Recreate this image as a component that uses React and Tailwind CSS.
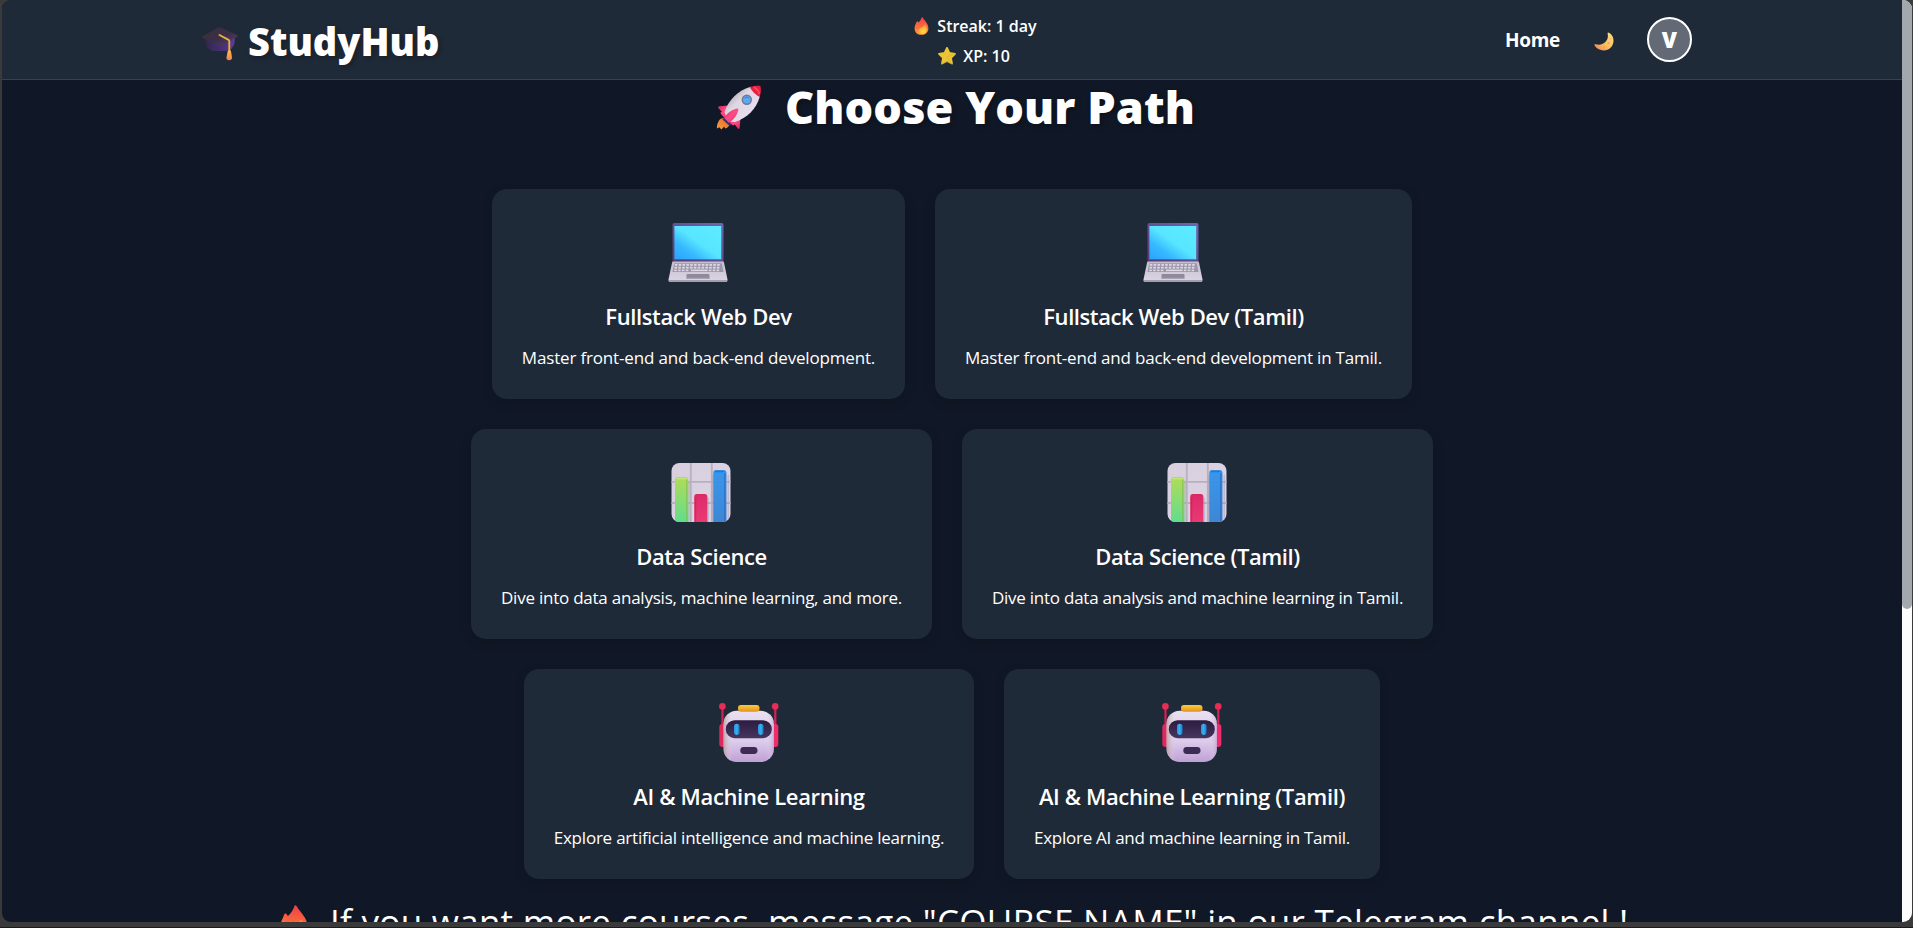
import React from "react";

function CapIcon() {
  return (
    <svg className="h-[37px] w-[38px] shrink-0" viewBox="0 0 38 37">
      <defs>
        <linearGradient id="capTop" x1="0" y1="0" x2="1" y2="1">
          <stop offset="0" stopColor="#3a3038" />
          <stop offset=".55" stopColor="#3b2f48" />
          <stop offset="1" stopColor="#5b4173" />
        </linearGradient>
        <linearGradient id="capBase" x1="0" y1="0" x2="1" y2="0">
          <stop offset="0" stopColor="#33274a" />
          <stop offset=".6" stopColor="#49307a" />
          <stop offset="1" stopColor="#5d3f8f" />
        </linearGradient>
        <linearGradient id="tassel" x1="0" y1="0" x2="0" y2="1">
          <stop offset="0" stopColor="#ffc04a" />
          <stop offset="1" stopColor="#f87b56" />
        </linearGradient>
      </defs>
      <path d="M4.5 13 L5.5 20 Q8 25 15 25 H24 Q32 24.5 33.5 17 L34 11 Z" fill="url(#capBase)" />
      <path d="M.8 11.5 Q.4 10.8 1.4 10.3 L17.5 1.4 Q18.5 1 19.5 1.4 L36.3 9.2 Q37.2 9.8 36.4 10.4 L21.5 19.5 Q20.3 20.2 19 19.6 Z" fill="url(#capTop)" />
      <path d="M18.5 9 L27.5 13.8 Q28.3 14.4 28.3 15.5 V26" fill="none" stroke="#e8b13c" strokeWidth="1.9" strokeLinecap="round" />
      <path d="M28.3 24 Q30.3 24 30.2 26.5 L31 31.5 Q31 34.3 28.2 34.3 Q25.2 34.3 25.5 31.5 L26.4 26.5 Q26.4 24 28.3 24Z" fill="url(#tassel)" />
    </svg>
  );
}

function FireIcon({ className }) {
  return (
    <svg className={className} viewBox="0 0 28 34">
      <defs>
        <linearGradient id="flame" x1=".6" y1="0" x2=".5" y2="1">
          <stop offset="0" stopColor="#f03d48" />
          <stop offset=".5" stopColor="#fa6c3c" />
          <stop offset="1" stopColor="#ff9a36" />
        </linearGradient>
        <radialGradient id="ember" cx=".6" cy=".75" r=".7">
          <stop offset="0" stopColor="#ffdc3e" />
          <stop offset=".6" stopColor="#ffb43b" />
          <stop offset="1" stopColor="#ff8a3a" />
        </radialGradient>
      </defs>
      <path d="M14.5 .6 C15.6 -.2 16.5 1 17.3 2.4 C20 7 27 12.5 27 21.5 C27 29.5 21 33.5 14 33.5 C6.5 33.5 1 29 1 21.5 C1 16.5 3 14 4.5 9.5 C5.2 7.6 6.6 7.6 7.4 9.2 L8.2 10.4 C10.5 8.5 13.5 4.5 14.5 .6Z" fill="url(#flame)" />
      <path d="M20.2 14.5 C21 13.4 21.8 14 22 15.3 C22.6 18 24.5 20 24.3 24.5 C24 29.6 20 32.4 15.3 32.4 C9.6 32.4 7 28.5 7.8 25 C8.8 20.8 17 19.8 20.2 14.5Z" fill="url(#ember)" />
      <path d="M14 8 C11.5 14 5.5 16 5 23 M9.5 12 C7 15 4 17.5 3.2 22 M16 11 C15 16 9.5 18 8 22.5" fill="none" stroke="#e8513f" strokeOpacity=".55" strokeWidth=".9" />
    </svg>
  );
}

function StarIcon() {
  return (
    <svg className="h-[18px] w-[18px] shrink-0" viewBox="0 0 18 18">
      <path d="M9 .9 L11.4 6 L17 6.8 L13 10.8 L14 16.5 L9 13.9 L4 16.5 L5 10.8 L1 6.8 L6.6 6Z" fill="#ebc437" stroke="#ebc437" strokeWidth="1.8" strokeLinejoin="round" />
      <path d="M4 16.9 L9 14.3 L14 16.9" fill="none" stroke="#c79a45" strokeWidth=".8" strokeLinecap="round" />
      <path d="M9 10 L15.5 7 M9 10 L12.6 15" stroke="#d9ad2d" strokeWidth=".6" />
    </svg>
  );
}

function MoonIcon() {
  return (
    <svg className="h-[19px] w-[20px] shrink-0" viewBox="0 0 20 19">
      <defs>
        <linearGradient id="moon" x1="1" y1="0" x2="0" y2="1">
          <stop offset="0" stopColor="#ffe08a" />
          <stop offset=".55" stopColor="#fdbd5e" />
          <stop offset="1" stopColor="#ee8455" />
        </linearGradient>
      </defs>
      <path d="M14.3 .6 C17.6 2 19.6 5 19.5 9 C19.3 14.6 15 18.4 9.8 18.4 C5.8 18.4 2.2 16.4 .5 13.2 C.2 12.4 .7 12 1.5 12.3 C6 13.5 9.5 12.2 12 9.3 C14 6.8 14.2 4.2 13.6 1.4 C13.5 .8 13.8 .4 14.3 .6Z" fill="url(#moon)" />
      <circle cx="14.5" cy="11" r="1" fill="#eda24e" />
      <circle cx="10" cy="15.5" r="1.1" fill="#eda24e" />
      <circle cx="16.6" cy="6.8" r=".8" fill="#f1b35d" />
    </svg>
  );
}

function RocketIcon() {
  return (
    <svg className="mt-[4px] h-[45px] w-[46px] shrink-0" viewBox="0 0 46 45">
      <defs>
        <linearGradient id="hull" x1=".2" y1=".2" x2=".8" y2=".8">
          <stop offset="0" stopColor="#b9b3bd" />
          <stop offset=".35" stopColor="#dfd7e2" />
          <stop offset="1" stopColor="#eadcf2" />
        </linearGradient>
        <linearGradient id="fin" x1="0" y1="0" x2="1" y2="1">
          <stop offset="0" stopColor="#d92a5b" />
          <stop offset=".5" stopColor="#ff4c86" />
          <stop offset="1" stopColor="#e0245e" />
        </linearGradient>
        <linearGradient id="exhaust" x1="0" y1="1" x2="1" y2="0">
          <stop offset="0" stopColor="#ffa03a" />
          <stop offset="1" stopColor="#d9622b" />
        </linearGradient>
      </defs>
      <path d="M5 33.5 C2.5 35 .8 39 1 43.5 L3.3 42.2 L5.4 44.5 L8 41.8 L9.6 43.5 C12.5 42.5 14 40 14 37.5 L9.5 32.8Z" fill="url(#exhaust)" />
      <path d="M9 31.5 L6.5 34.5 L13.5 41 L17 38Z" fill="#3b3364" />
      <path d="M12 20.5 L3.4 21.3 C2 21.5 1.8 22.8 2.8 23.6 L6 27 L4.2 27.6 C5.5 30 7 31.5 8.5 33 L14 25Z" fill="url(#fin)" />
      <path d="M24.5 33 L23.7 42.6 C23.6 44.2 22.6 44.5 21.7 43.3 L18.8 39.5 L17 40.5 C16 39.5 14 38 13 37 L20 31Z" fill="url(#fin)" />
      <path d="M34.5 1.8 C22 5.5 12.5 15 8.5 27 L10 32 L14.5 36.8 L19 37 C31 33 40.5 24 43.8 11.5Z" fill="url(#hull)" />
      <path d="M33.8 2 C38 .6 42 .5 44.3 .8 C45.3 4 45 8 43.7 12 C40.5 10.5 36 6.5 33.8 2Z" fill="#e81f43" />
      <path d="M38 2.2 C41 4 42.5 6 43.5 9" fill="none" stroke="#ff5065" strokeWidth="1.4" />
      <path d="M22.3 23.6 C17 23.5 10 29 8.3 33 L12.8 37.7 C17.5 35.5 22.5 28.5 22.3 23.6Z" fill="url(#fin)" />
      <circle cx="30.8" cy="14.8" r="5.2" fill="#75758c" />
      <circle cx="30.8" cy="14.8" r="3.8" fill="#5aa9f6" />
      <path d="M28.5 13 A3.6 3.6 0 0 1 33 13" fill="none" stroke="#3c7fd0" strokeWidth="1" />
    </svg>
  );
}

function LaptopIcon() {
  const keys = Array.from({ length: 12 }, (_, i) => 6.8 + i * 3.85);
  return (
    <svg className="h-[59px] w-[60px]" viewBox="0 0 60 59">
      <defs>
        <linearGradient id="screen" x1=".05" y1=".95" x2=".9" y2=".1">
          <stop offset="0" stopColor="#2da6ff" />
          <stop offset=".25" stopColor="#36b8ff" />
          <stop offset=".55" stopColor="#58e6ff" />
          <stop offset="1" stopColor="#5ceaff" />
        </linearGradient>
        <linearGradient id="bezel" x1="0" y1="1" x2="1" y2="0">
          <stop offset="0" stopColor="#5a3a70" />
          <stop offset="1" stopColor="#6c66b4" />
        </linearGradient>
        <linearGradient id="deck" x1="0" y1="0" x2="0" y2="1">
          <stop offset="0" stopColor="#c5bdd0" />
          <stop offset="1" stopColor="#dcd6e4" />
        </linearGradient>
      </defs>
      <rect x="4.5" y="0" width="51" height="39" rx="2" fill="url(#bezel)" />
      <rect x="6.4" y="3" width="46.8" height="33.3" fill="url(#screen)" />
      <path d="M4.3 38.5 H55.8 L59.5 56.5 Q59.5 59 57.8 59 H2.2 Q.4 59 .5 56.5Z" fill="url(#deck)" />
      <path d="M.5 57 H59.5 Q59.3 59 57.8 59 H2.2 Q.6 59 .5 57Z" fill="#a79db0" />
      <path d="M6.3 40.2 H53.7 L55.5 49 H4.5Z" fill="#9c96a9" />
      {keys.map((x) => (
        <g key={x} fill="#dcd8e4">
          <rect x={x} y="41" width="2.6" height="1.8" />
          <rect x={x - 0.3} y="43.8" width="2.6" height="1.8" />
          {(x < 20 || x > 37) && <rect x={x - 0.6} y="46.6" width="2.6" height="1.6" />}
        </g>
      ))}
      <rect x="23" y="46.6" width="14" height="1.6" fill="#dcd8e4" />
      <rect x="18.5" y="51" width="23" height="5" rx="1" fill="#8f899c" />
      <rect x="18.5" y="54.8" width="23" height="1.2" fill="#a9a3b5" />
    </svg>
  );
}

function ChartIcon() {
  return (
    <svg className="h-[59px] w-[60px]" viewBox="0 0 60 59">
      <defs>
        <clipPath id="tile"><rect x=".5" y="0" width="59" height="59" rx="8" /></clipPath>
        <linearGradient id="tileFill" x1="0" y1="0" x2="1" y2="1">
          <stop offset="0" stopColor="#d8d0dd" />
          <stop offset="1" stopColor="#dcd2e6" />
        </linearGradient>
        <linearGradient id="barGreen" x1="0" y1="0" x2="0" y2="1">
          <stop offset="0" stopColor="#b0dc58" />
          <stop offset="1" stopColor="#62dd8c" />
        </linearGradient>
        <linearGradient id="barPink" x1="0" y1="0" x2="0" y2="1">
          <stop offset="0" stopColor="#d72a5e" />
          <stop offset=".15" stopColor="#e02c6c" />
          <stop offset="1" stopColor="#e93a74" />
        </linearGradient>
        <linearGradient id="barBlue" x1="0" y1="0" x2="0" y2="1">
          <stop offset="0" stopColor="#3897ec" />
          <stop offset="1" stopColor="#3f86d4" />
        </linearGradient>
      </defs>
      <g clipPath="url(#tile)">
        <rect width="60" height="59" fill="url(#tileFill)" />
        <path d="M19.8 0V59 M40.8 0V59 M0 18.8H60 M0 40H60" stroke="#b9b0bf" strokeWidth="1.8" />
        <path d="M18 18V59 M41.5 12V59 M37.2 35V59 M57.2 12V59" stroke="#a79bb4" strokeOpacity=".45" strokeWidth="1.6" />
        <path d="M4 59V17 Q4 14 7 14H14.4 Q17.4 14 17.4 17V59Z" fill="url(#barGreen)" />
        <path d="M23.2 59V34 Q23.2 31 26 31H33.6 Q36.4 31 36.4 34V59Z" fill="url(#barPink)" />
        <path d="M42.2 59V10 Q42.2 7 45 7H52.6 Q55.5 7 55.5 10V59Z" fill="url(#barBlue)" />
        <path d="M15.8 17V59" stroke="#7fb94f" strokeOpacity=".55" strokeWidth="1.6" />
        <path d="M53.8 10V59" stroke="#2c66b8" strokeOpacity=".6" strokeWidth="1.6" />
        <path d="M24.5 34V59" stroke="#b81f4c" strokeOpacity=".5" strokeWidth="1.4" />
        <path d="M6 15.6H15" stroke="#c2e977" strokeWidth="1.3" strokeLinecap="round" />
        <path d="M44.5 8.5H52.8" stroke="#2f74cf" strokeWidth="1.3" strokeLinecap="round" />
      </g>
    </svg>
  );
}

function RobotIcon() {
  return (
    <svg className="h-[59px] w-[60px]" viewBox="0 0 60 59">
      <defs>
        <linearGradient id="head" x1="0" y1="0" x2="0" y2="1">
          <stop offset="0" stopColor="#eadff0" />
          <stop offset=".6" stopColor="#dccbea" />
          <stop offset="1" stopColor="#c0a0d6" />
        </linearGradient>
        <linearGradient id="headShade" x1="0" y1="0" x2="1" y2="0">
          <stop offset="0" stopColor="#b79b9d" stopOpacity=".8" />
          <stop offset=".18" stopColor="#e6dcec" stopOpacity="0" />
          <stop offset=".85" stopColor="#e6dcec" stopOpacity="0" />
          <stop offset="1" stopColor="#b79fd0" stopOpacity=".6" />
        </linearGradient>
        <linearGradient id="visor" x1="0" y1="0" x2="0" y2="1">
          <stop offset="0" stopColor="#2c1c40" />
          <stop offset="1" stopColor="#453560" />
        </linearGradient>
        <linearGradient id="eye" x1="0" y1="0" x2="1" y2="0">
          <stop offset="0" stopColor="#2496e0" />
          <stop offset=".5" stopColor="#38b0f0" />
          <stop offset="1" stopColor="#1c73b8" />
        </linearGradient>
        <linearGradient id="lamp" x1="0" y1="0" x2="0" y2="1">
          <stop offset="0" stopColor="#ffcb2d" />
          <stop offset="1" stopColor="#e0912a" />
        </linearGradient>
      </defs>
      <rect x="2.4" y="3" width="2.2" height="22" fill="#d02458" />
      <rect x="55.2" y="3" width="2.2" height="22" fill="#d02458" />
      <circle cx="3.4" cy="3.4" r="3.3" fill="#e52d55" />
      <circle cx="56.2" cy="3.4" r="3.3" fill="#e52d55" />
      <rect x=".3" y="21" width="8" height="23" rx="3" fill="#e0285c" />
      <rect x="51" y="21" width="8.3" height="23" rx="3" fill="#f02c6c" />
      <rect x="4.6" y="7.8" width="50.2" height="51.2" rx="13" fill="url(#head)" />
      <rect x="4.6" y="7.8" width="50.2" height="51.2" rx="13" fill="url(#headShade)" />
      <rect x="19" y="2" width="21.5" height="6.8" rx="3" fill="url(#lamp)" />
      <rect x="6.8" y="17.2" width="46" height="18" rx="8.8" fill="url(#visor)" />
      <rect x="15" y="20.7" width="5.6" height="11.2" rx="2.8" fill="url(#eye)" />
      <rect x="39" y="20.7" width="5.6" height="11.2" rx="2.8" fill="url(#eye)" />
      <rect x="21.3" y="44" width="17.2" height="7" rx="3.4" fill="#3c2b52" />
    </svg>
  );
}

const rows = [
  [
    { icon: LaptopIcon, width: "w-[413px]", title: "Fullstack Web Dev", tt: "tracking-[-0.38px]", text: "Master front-end and back-end development.", dt: "tracking-[-0.17px]" },
    { icon: LaptopIcon, width: "w-[477px]", title: "Fullstack Web Dev (Tamil)", tt: "tracking-[-0.42px]", text: "Master front-end and back-end development in Tamil.", dt: "tracking-[-0.2px]" },
  ],
  [
    { icon: ChartIcon, width: "w-[461px]", title: "Data Science", tt: "tracking-[-0.4px]", text: "Dive into data analysis, machine learning, and more.", dt: "tracking-[-0.235px]" },
    { icon: ChartIcon, width: "w-[471px]", title: "Data Science (Tamil)", tt: "tracking-[-0.46px]", text: "Dive into data analysis and machine learning in Tamil.", dt: "tracking-[-0.24px]" },
  ],
  [
    { icon: RobotIcon, width: "w-[450px]", title: "AI & Machine Learning", tt: "tracking-[-0.34px]", text: "Explore artificial intelligence and machine learning.", dt: "tracking-[-0.22px]" },
    { icon: RobotIcon, width: "w-[376px]", title: "AI & Machine Learning (Tamil)", tt: "tracking-[-0.36px]", text: "Explore AI and machine learning in Tamil.", dt: "tracking-[-0.27px]" },
  ],
];

function CourseCard({ card }) {
  const Icon = card.icon;
  return (
    <div className={`flex h-[210px] flex-col items-center rounded-[15px] bg-[#1f2a38] pt-[34px] whitespace-nowrap shadow-[0_4px_12px_rgba(0,0,0,0.12)] ${card.width}`}>
      <div className="pr-px"><Icon /></div>
      <h2 className={`mt-[18px] text-[22px] leading-[32px] font-semibold ${card.tt}`}>{card.title}</h2>
      <p className={`mt-[13px] text-[17px] leading-[26px] ${card.dt}`}>{card.text}</p>
    </div>
  );
}

function Header() {
  return (
    <header className="flex h-[80px] items-center justify-between border-b border-[#374151] bg-[#1f2a38] pr-[210px] pl-[199px] whitespace-nowrap">
      <div className="flex w-[245px] items-center gap-[9px]">
        <div className="pt-[9px]"><CapIcon /></div>
        <span className="pt-[3px] text-[38px] leading-[48px] font-extrabold [text-shadow:2px_2px_5px_rgba(0,0,0,0.3)]">StudyHub</span>
      </div>
      <div className="flex flex-col items-center pt-[3px] text-[16px] leading-[30px] font-semibold">
        <div className="flex items-center gap-[8px]">
          <FireIcon className="h-[18px] w-[15px]" />
          <span>Streak: 1 day</span>
        </div>
        <div className="flex items-center gap-[7px] pr-[3px]">
          <StarIcon />
          <span>XP: 10</span>
        </div>
      </div>
      <div className="flex items-center">
        <a className="text-[19px] leading-[30px] font-bold tracking-[-0.3px]">Home</a>
        <div className="ml-[34px] pt-[3px]"><MoonIcon /></div>
        <div className="ml-[33px] flex h-[45px] w-[45px] items-center justify-center rounded-full border-2 border-white bg-[#636975] text-[22px] font-extrabold">V</div>
      </div>
    </header>
  );
}

export default function App() {
  return (
    <div className="flex h-[928px] flex-col overflow-hidden bg-[#3a3a3a] font-['Open_Sans','Noto_Sans',sans-serif] text-white">
      <div className="mr-[1px] ml-[2px] flex h-[922px] overflow-hidden rounded-[9px]">
        <div className="h-[922px] w-[1900px] overflow-hidden bg-[#101726]">
          <Header />
          <main>
            <div className="flex h-[50px] items-center justify-center gap-[23px] pl-[7px]">
              <RocketIcon />
              <h1 className="pt-[3px] text-[45px] leading-[50px] font-extrabold tracking-[0.1px] whitespace-nowrap [text-shadow:2px_2px_5px_rgba(0,0,0,0.3)]">Choose Your Path</h1>
            </div>
            <div className="mt-[59px] flex flex-col gap-[30px]">
              {rows.map((row, i) => (
                <div key={i} className="flex justify-center gap-[30px]">
                  {row.map((card) => <CourseCard key={card.title} card={card} />)}
                </div>
              ))}
            </div>
            <div className="mt-[19px] flex h-[60px] items-start pl-[277px] whitespace-nowrap">
              <FireIcon className="mt-[7px] h-[36px] w-[30px] shrink-0" />
              <p className="ml-[21px] text-[35px] leading-[48px] tracking-[0.28px]">If you want more courses, message "COURSE NAME" in our Telegram channel !</p>
            </div>
          </main>
        </div>
        <div className="h-[922px] w-[10px] bg-[#fcfcfd]">
          <div className="h-[609px] w-[10px] rounded-b-[5px] bg-[#a3a7ae]" />
        </div>
      </div>
      <div className="mt-[5px] h-px bg-[#1b1b1b]" />
    </div>
  );
}
